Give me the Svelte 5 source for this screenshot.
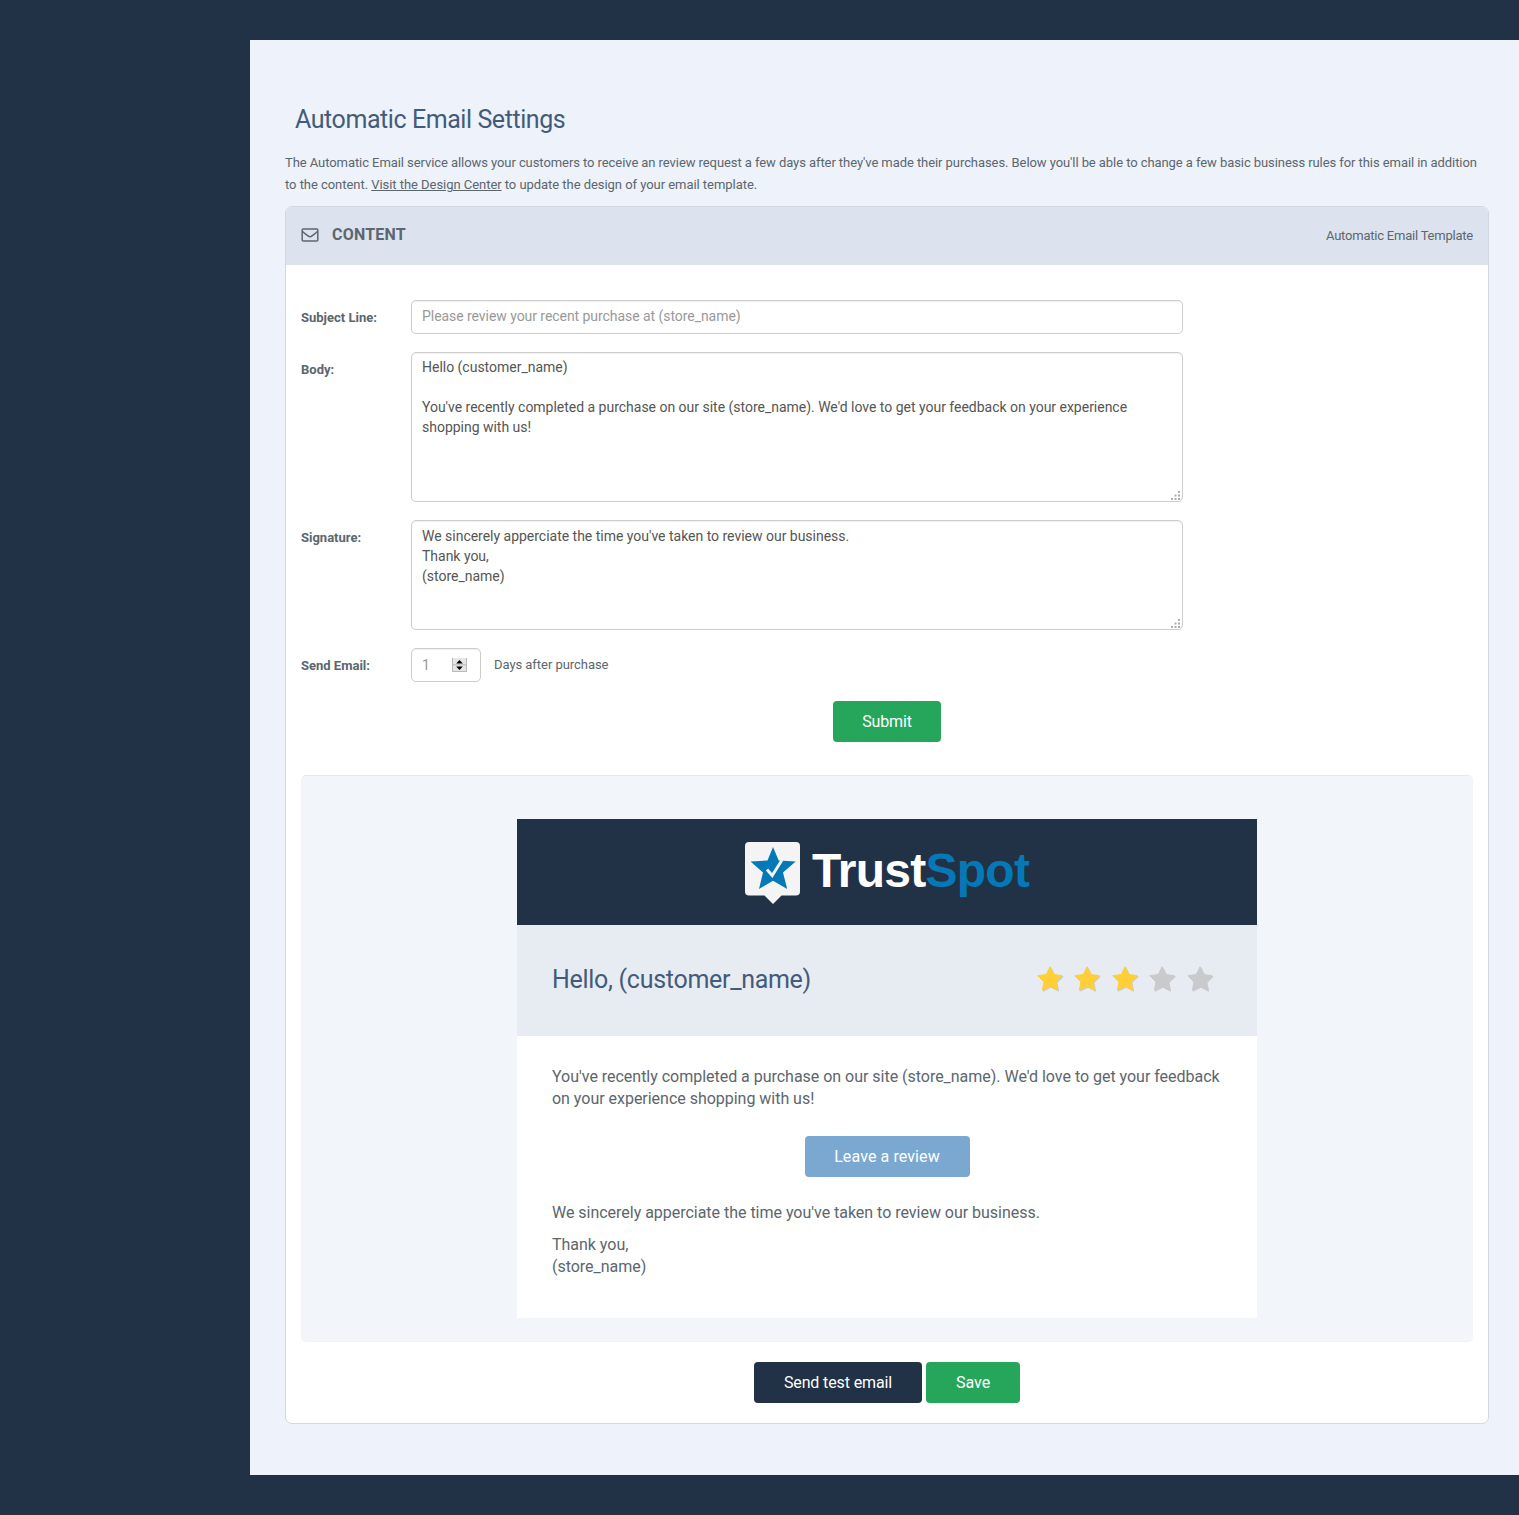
<script>
  let subject = $state('');
  let body = $state("Hello (customer_name)\n\nYou've recently completed a purchase on our site (store_name). We'd love to get your feedback on your experience\nshopping with us!");
  let signature = $state("We sincerely apperciate the time you've taken to review our business.\nThank you,\n(store_name)");
  const stars = [true, true, true, false, false];
  const starPath = 'M13 .8l3.700 7.700 8.500 1.200-6.200 6 1.600 8.500-7.600-4-7.600 4L7 15.700l-6.200-6 8.500-1.200z';
</script>

{#snippet grip()}
  <svg class="grip" width="9" height="9" viewBox="0 0 9 9" aria-hidden="true">
    <path d="M7 0h2v2H7zM7 3.500h2v2H7zM3.500 3.500h2v2h-2zM7 7h2v2H7zM3.500 7h2v2h-2zM0 7h2v2H0z" fill="#b0b0b0" />
  </svg>
{/snippet}

<main>
  <h1>Automatic Email Settings</h1>
  <p class="intro">
    The Automatic Email service allows your customers to receive an review request a few days after they've made their purchases. Below you'll be able to change a few basic business rules for this email in addition<br />
    <span class="second">to the content. <a href="#design">Visit the Design Center</a> to update the design of your email template.</span>
  </p>

  <section class="panel">
    <header class="panel-head">
      <svg width="18" height="14" viewBox="0 0 18 14" fill="none" stroke="#5d666d" stroke-width="1.500" aria-hidden="true">
        <rect x="1.200" y=".9" width="15.600" height="12.200" rx="1" />
        <path d="M1.300 3.200c2 1.900 4 3.300 5.700 4.700 1.500 1.200 2.500 1.200 4 0 1.700-1.400 3.700-2.800 5.700-4.700" />
      </svg>
      <h2>CONTENT</h2>
      <span class="template">Automatic Email Template</span>
    </header>

    <div class="form">
      <div class="row">
        <label for="subject">Subject Line:</label>
        <input id="subject" bind:value={subject} placeholder="Please review your recent purchase at (store_name)" />
      </div>
      <div class="row">
        <label for="body">Body:</label>
        <div class="area"><textarea id="body" class="tall" bind:value={body} spellcheck="false"></textarea>{@render grip()}</div>
      </div>
      <div class="row">
        <label for="signature">Signature:</label>
        <div class="area"><textarea id="signature" class="short" bind:value={signature} spellcheck="false"></textarea>{@render grip()}</div>
      </div>
      <div class="row">
        <span class="label">Send Email:</span>
        <div class="number">
          <span>1</span>
          <svg width="15" height="14" viewBox="0 0 15 14" aria-hidden="true">
            <path d="M0 0h15v14H0z" fill="#e6e6e6" />
            <path d="M.5 0v13.500h14V0M.5 6.800h14" fill="none" stroke="#b9b9b9" />
            <path d="M7.500 2l3.300 3.500H4.200zM7.500 12l3.300-3.500H4.200z" fill="#000" />
          </svg>
        </div>
        <span class="days">Days after purchase</span>
      </div>
      <div class="center last"><button class="green submit">Submit</button></div>
    </div>

    <div class="well">
      <article>
        <div class="brand">
          <svg width="55" height="62" viewBox="0 0 55 62" aria-hidden="true">
            <path d="M4 0h47a4 4 0 0 1 4 4v45.500a4 4 0 0 1-4 4H36.500L28 62l-8.500-8.500H4a4 4 0 0 1-4-4V4a4 4 0 0 1 4-4z" fill="#f4f4f5" />
            <path d="M28 5l5.700 13.500 17 1L38 30.500 42.200 47 28 38.800 14 47l4-16.500L5.500 19.500l17-1z" fill="#0579b8" />
            <path d="M22 27.500l5.200 6L37 18" fill="none" stroke="#f4f4f5" stroke-width="2.900" />
          </svg>
          <span class="word">Trust<b>Spot</b></span>
        </div>
        <div class="greeting">
          <h3>Hello, (customer_name)</h3>
          <div class="stars">
            {#each stars as on}
              <svg width="26" height="26" viewBox="0 0 26 26" aria-hidden="true"><path class:on d={starPath} /></svg>
            {/each}
          </div>
        </div>
        <div class="copy">
          <p>You've recently completed a purchase on our site (store_name). We'd love to get your feedback<br />on your experience shopping with us!</p>
          <div class="center"><button class="blue">Leave a review</button></div>
          <p>We sincerely apperciate the time you've taken to review our business.</p>
          <p class="thanks">Thank you,<br />(store_name)</p>
        </div>
      </article>
    </div>

    <div class="actions">
      <button class="navy">Send test email</button>
      <button class="green save">Save</button>
    </div>
  </section>
</main>

<style>
  :global(body) { background: #213146; }
  * { box-sizing: border-box; }
  main {
    margin: 40px 0 40px 250px;
    height: 1435px;
    padding: 60px 30px 0 35px;
    background: #eef2fa;
    color: #5b666e;
    font: 13px/22px Roboto, "Liberation Sans", sans-serif;
    white-space: nowrap;
  }
  h1, h2, h3, p { margin: 0; font-weight: 400; }
  h1 { padding: 1px 0 0 10px; height: 52px; font-size: 25px; line-height: 38px; letter-spacing: -.43px; color: #425b7a; }
  .intro { height: 54px; letter-spacing: -.072px; }
  .second { letter-spacing: -.045px; }
  a { color: inherit; text-decoration: underline; }
  .panel {
    height: 1218px;
    border: 1px solid #d3d8df;
    border-radius: 7px;
    background: #fff;
    overflow: hidden;
  }
  .panel-head { display: flex; align-items: center; height: 58px; padding: 0 15px; background: #dce3ee; }
  .panel-head svg { margin-top: -2px; }
  h2 { margin-left: 13px; padding-bottom: 2px; font-size: 16px; font-weight: 700; letter-spacing: .2px; }
  .template { margin-left: auto; letter-spacing: -.22px; }
  .form { display: grid; gap: 18px; padding: 35px 15px 0; }
  .row { display: flex; }
  label, .label { flex: none; width: 110px; padding-top: 7px; font-weight: 700; }
  input, textarea, .number {
    display: block;
    margin: 0;
    padding: 5px 10px 7px;
    border: 1px solid #ccc;
    border-radius: 5px;
    background: #fff;
    color: #555;
    font: 14px/20px Roboto, "Liberation Sans", sans-serif;
    box-shadow: inset 0 1px 1px rgba(0, 0, 0, .06);
  }
  input { width: 772px; height: 34px; letter-spacing: -.055px; }
  input::placeholder { color: #999; opacity: 1; }
  .area { position: relative; width: 772px; }
  textarea { width: 772px; resize: none; overflow: hidden; white-space: pre; letter-spacing: -.015px; }
  .tall { height: 150px; padding-top: 4px; }
  .short { height: 110px; }
  .grip { position: absolute; right: 3px; bottom: 2px; }
  .number { display: flex; align-items: center; justify-content: space-between; width: 70px; height: 34px; padding: 6px 13px 6px 10px; color: #999; }
  .days { padding: 6px 0 0 13px; letter-spacing: -.05px; }
  .center { text-align: center; }
  .last { padding-top: 1px; }
  button {
    display: inline-block;
    height: 41px;
    margin: 0;
    padding: 0;
    border: 0;
    border-radius: 4px;
    color: #fff;
    font: 16px/22px Roboto, "Liberation Sans", sans-serif;
    vertical-align: top;
  }
  .green { background: #26a65b; }
  .submit { width: 108px; letter-spacing: -.15px; }
  .save { width: 94px; }
  .blue { width: 165px; background: #7ba8d0; letter-spacing: .1px; }
  .navy { width: 168px; background: #213146; letter-spacing: -.12px; }
  .actions button { padding-top: 1px; }
  .well {
    height: 567px;
    margin: 33px 15px 0;
    padding-top: 43px;
    border: 1px solid #f0f3f8;
    border-top-color: #e6eaf0;
    border-radius: 5px;
    background: #f2f5fa;
  }
  article { width: 740px; height: 499px; margin: 0 auto; background: #fff; }
  .brand { display: flex; justify-content: center; align-items: center; height: 106px; gap: 12px; background: #213146; }
  .brand svg { margin-top: 2px; }
  .word { font: 700 48px/56px "Liberation Sans", sans-serif; letter-spacing: -.75px; color: #fff; padding-bottom: 3px; }
  .word b { color: #0579b8; }
  .greeting { display: flex; justify-content: space-between; height: 111px; padding: 0 44px 2px 35px; align-items: center; background: #e7ecf3; }
  h3 { font-size: 25px; line-height: 30px; letter-spacing: -.29px; color: #425b7a; }
  .stars { display: flex; gap: 11.600px; padding-bottom: 2px; }
  .stars svg { overflow: visible; }
  .stars path { fill: #c9cacb; stroke: #c9cacb; stroke-linejoin: round; filter: drop-shadow(1px 1px 0 rgba(120, 100, 110, .25)); }
  .stars path.on { fill: #ffcf37; stroke: #ffcf37; }
  .copy { padding: 30px 35px 0; font-size: 16px; letter-spacing: -.022px; }
  .copy .center { padding: 26px 0 25px; height: 92px; }
  .thanks { padding-top: 10px; }
  .actions { display: flex; justify-content: center; gap: 4px; padding-top: 20px; }
</style>
